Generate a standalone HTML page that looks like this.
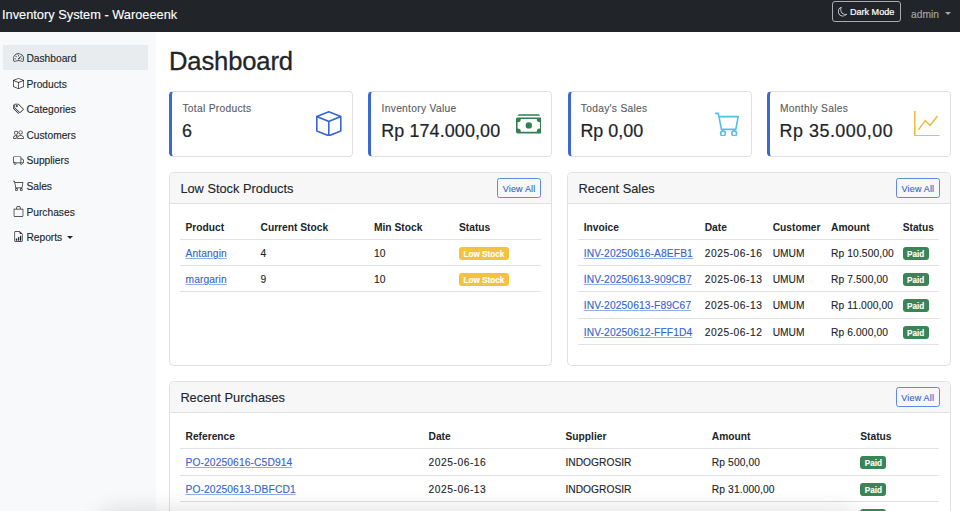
<!DOCTYPE html>
<html><head><meta charset="utf-8">
<style>
*{box-sizing:border-box;margin:0;padding:0}
html,body{width:960px;height:511px;overflow:hidden;background:#fff}
body{font-family:"Liberation Sans",sans-serif;color:#212529;font-size:10.24px;position:relative}
.abs{position:absolute}
.ni span,td,.ch .t,#brand,.stat .lbl{-webkit-text-stroke:.12px currentColor}
.stat .val{-webkit-text-stroke:.22px currentColor}
svg{display:block}
#nav{left:0;top:0;width:960px;height:32px;background:#212529}
#brand{left:2px;top:5px;height:20px;line-height:20px;font-size:12.8px;color:#fff;white-space:nowrap}
#dm{left:832px;top:1px;width:69px;height:20.6px;border:1px solid #a9abad;border-radius:3px;color:#fff}
#dm svg{position:absolute;left:4.8px;top:5.4px;width:9.4px;height:9.4px}
#dm span{position:absolute;left:16.9px;top:.5px;line-height:18px;font-size:9.1px;-webkit-text-stroke:.2px #fff;white-space:nowrap}
#admin{left:911px;top:7.3px;-webkit-text-stroke:.15px rgba(255,255,255,.5);line-height:16px;font-size:10.24px;color:rgba(255,255,255,.55);white-space:nowrap}
#admin i{display:inline-block;width:0;height:0;border-left:3px solid transparent;border-right:3px solid transparent;border-top:3px solid rgba(255,255,255,.6);margin-left:5.8px;vertical-align:3px;-webkit-text-stroke:0}
#side{left:0;top:32px;width:156px;height:479px;background:#f8f9fa}
.ni{position:absolute;left:3px;width:145.2px;height:25.4px;border-radius:0;color:#212529;font-size:10.24px;line-height:25.6px;white-space:nowrap}
.ni.act{background:#e9ecef}
.ni svg{position:absolute;left:9.5px;top:7.3px;width:11px;height:11px}
.ni span{position:absolute;left:23.4px;top:1px}
.caret{display:inline-block;width:0;height:0;border-left:3px solid transparent;border-right:3px solid transparent;border-top:3.5px solid #212529;margin-left:5.2px;vertical-align:2.3px}
h1{position:absolute;left:169px;top:44px;line-height:35px;font-size:25.6px;letter-spacing:-.15px;-webkit-text-stroke:.3px currentColor !important;font-weight:400;color:#212529;white-space:nowrap}
.card{position:absolute;border:1px solid #dfe0e1;border-radius:4.5px;background:#fff;overflow:hidden}
.stat{top:91px;width:184px;height:65.5px;border-left:3px solid #3a68d4}
.stat .lbl{position:absolute;left:10.2px;top:10px;line-height:14px;font-size:10.24px;letter-spacing:.3px;color:#595c5f;white-space:nowrap}
.stat .val{position:absolute;left:9.8px;top:27px;line-height:25px;font-size:17.92px;color:#212529;white-space:nowrap}
.stat svg{position:absolute;left:144.2px;top:18.8px}
.ch{position:absolute;left:0;top:0;right:0;height:31px;background:#f7f7f7;border-bottom:1px solid #dfe0e1}
.ch .t{position:absolute;left:10.2px;top:.5px;line-height:30px;font-size:12.8px;color:#212529;white-space:nowrap}
.btn{position:absolute;top:5px;height:19.8px;width:43.8px;border:1px solid #6089dd;border-radius:2.6px;color:#3564cc;-webkit-text-stroke:.12px currentColor;font-size:8.96px;line-height:21px;letter-spacing:.2px;text-align:center;white-space:nowrap;background:transparent}
table{position:absolute;border-collapse:collapse;table-layout:fixed;font-size:10.24px;color:#212529}
th{font-weight:700;text-align:left;height:24.3px;padding:2px 5.8px 0;border-bottom:1px solid #dee2e6;white-space:nowrap}
td{height:26.3px;padding:1.8px 5.8px 0;border-bottom:1px solid #dee2e6;white-space:nowrap}
a{color:#3564cc;text-decoration:underline;text-decoration-color:#93aee6;text-underline-offset:1px}
.badge{display:inline-block;font-size:8.2px;font-weight:700;color:#fff;border-radius:3px;padding:0 4.4px;height:13px;line-height:15.6px;vertical-align:middle}
.r3 td{color:#d6d6d6}.r3 a{color:#c9d6f2;text-decoration:none}
.pt th{padding-top:1.2px}
td.d{letter-spacing:.55px}td.m{letter-spacing:.12px}td a{letter-spacing:.12px}
.bw{background:#f3c23f}
.bs{background:#3a8558}
</style></head><body>
<div id="nav" class="abs">
  <div id="brand" class="abs">Inventory System - Waroeeenk</div>
  <div id="dm" class="abs">
    <svg width="9" height="9" viewBox="0 0 16 16" fill="#fff"><path d="M6 .278a.77.77 0 0 1 .08.858 7.2 7.2 0 0 0-.878 3.46c0 4.021 3.278 7.277 7.318 7.277q.792-.001 1.533-.16a.79.79 0 0 1 .81.316.73.73 0 0 1-.031.893A8.35 8.35 0 0 1 8.344 16C3.734 16 0 12.286 0 7.71 0 4.266 2.114 1.312 5.124.06A.75.75 0 0 1 6 .278M4.858 1.311A7.27 7.27 0 0 0 1.025 7.71c0 4.020 3.279 7.276 7.319 7.276a7.320 7.320 0 0 0 5.205-2.162q-.506.063-1.029.063c-4.610 0-8.343-3.714-8.343-8.290 0-1.167.242-2.278.681-3.286"/></svg>
    <span>Dark Mode</span>
  </div>
  <div id="admin" class="abs">admin<i></i></div>
</div>

<div id="side" class="abs"></div>
<div class="ni act" style="top:45px">
  <svg width="10.24" height="10.24" viewBox="0 0 16 16" fill="#212529"><path d="M8 4a.5.5 0 0 1 .5.5V6a.5.5 0 0 1-1 0V4.5A.5.5 0 0 1 8 4M3.732 5.732a.5.5 0 0 1 .707 0l.915.914a.5.5 0 1 1-.708.708l-.914-.915a.5.5 0 0 1 0-.707M2 10a.5.5 0 0 1 .5-.5h1.586a.5.5 0 0 1 0 1H2.5A.5.5 0 0 1 2 10m9.5 0a.5.5 0 0 1 .5-.5h1.5a.5.5 0 0 1 0 1H12a.5.5 0 0 1-.5-.5m.754-4.246a.39.39 0 0 0-.527-.02L7.547 9.310a.91.91 0 1 0 1.302 1.258l3.434-4.297a.39.39 0 0 0-.029-.518z"/><path fill-rule="evenodd" d="M0 10a8 8 0 1 1 15.547 2.661c-.442 1.253-1.845 1.602-2.932 1.250C11.309 13.488 9.475 13 8 13c-1.474 0-3.310.488-4.615.911-1.087.352-2.490.003-2.932-1.250A8 8 0 0 1 0 10m8-7a7 7 0 0 0-6.603 9.329c.203.575.923.876 1.680.630C4.397 12.533 6.358 12 8 12s3.604.532 4.923.960c.757.245 1.477-.056 1.680-.631A7 7 0 0 0 8 3"/></svg>
  <span>Dashboard</span></div>
<div class="ni" style="top:70.6px">
  <svg width="10.24" height="10.24" viewBox="0 0 16 16" fill="#212529"><path d="M8.186 1.113a.5.5 0 0 0-.372 0L1.846 3.5 8 5.961 14.154 3.5zM15 4.239l-6.5 2.6v7.922l6.5-2.6V4.24zM7.5 14.762V6.838L1 4.239v7.923zM7.443.184a1.5 1.5 0 0 1 1.114 0l7.129 2.852A.5.5 0 0 1 16 3.5v8.662a1 1 0 0 1-.629.928l-7.185 2.874a.5.5 0 0 1-.372 0L.63 13.09a1 1 0 0 1-.63-.928V3.5a.5.5 0 0 1 .314-.464z"/></svg>
  <span>Products</span></div>
<div class="ni" style="top:96.2px">
  <svg width="10.24" height="10.24" viewBox="0 0 16 16" fill="#212529"><path d="M3 2v4.586l7 7L14.586 9l-7-7zM2 2a1 1 0 0 1 1-1h4.586a1 1 0 0 1 .707.293l7 7a1 1 0 0 1 0 1.414l-4.586 4.586a1 1 0 0 1-1.414 0l-7-7A1 1 0 0 1 2 6.586z"/><path d="M5.5 5a.5.5 0 1 1 0-1 .5.5 0 0 1 0 1m0 1a1.5 1.5 0 1 0 0-3 1.5 1.5 0 0 0 0 3M1 7.086a1 1 0 0 0 .293.707L8.750 15.250l-.043.043a1 1 0 0 1-1.414 0l-7-7A1 1 0 0 1 0 7.586V3a1 1 0 0 1 1-1z"/></svg>
  <span>Categories</span></div>
<div class="ni" style="top:121.8px">
  <svg width="10.24" height="10.24" viewBox="0 0 16 16" fill="#212529"><path d="M15 14s1 0 1-1-1-4-5-4-5 3-5 4 1 1 1 1zm-7.978-1L7 12.996c.001-.264.167-1.030.760-1.720C8.312 10.629 9.282 10 11 10c1.717 0 2.687.630 3.240 1.276.593.690.758 1.457.760 1.720l-.008.002-.014.002zM11 7a2 2 0 1 0 0-4 2 2 0 0 0 0 4m3-2a3 3 0 1 1-6 0 3 3 0 0 1 6 0M6.936 9.280a6 6 0 0 0-1.230-.247A7 7 0 0 0 5 9c-4 0-5 3-5 4q0 1 1 1h4.216A2.240 2.240 0 0 1 5 13c0-1.010.377-2.042 1.090-2.904.243-.294.526-.569.846-.816M4.920 10A5.500 5.500 0 0 0 4 13H1c0-.260.164-1.030.760-1.724.545-.636 1.492-1.256 3.160-1.275zM1.500 5.500a3 3 0 1 1 6 0 3 3 0 0 1-6 0m3-2a2 2 0 1 0 0 4 2 2 0 0 0 0-4"/></svg>
  <span>Customers</span></div>
<div class="ni" style="top:147.4px">
  <svg width="10.24" height="10.24" viewBox="0 0 16 16" fill="#212529"><path d="M0 3.5A1.5 1.5 0 0 1 1.5 2h9A1.5 1.5 0 0 1 12 3.5V5h1.020a1.5 1.5 0 0 1 1.170.563l1.481 1.850a1.5 1.5 0 0 1 .329.938V10.5a1.5 1.5 0 0 1-1.5 1.5H14a2 2 0 1 1-4 0H5a2 2 0 1 1-3.998-.085A1.5 1.5 0 0 1 0 10.5zm1.294 7.456A2 2 0 0 1 4.732 11h5.536a2 2 0 0 1 .732-.732V3.5a.5.5 0 0 0-.5-.5h-9a.5.5 0 0 0-.5.5v7a.5.5 0 0 0 .294.456M12 10a2 2 0 0 1 1.732 1h.768a.5.5 0 0 0 .5-.5V8.350a.5.5 0 0 0-.110-.312l-1.480-1.850A.5.5 0 0 0 13.020 6H12zm-9 1a1 1 0 1 0 0 2 1 1 0 0 0 0-2m9 0a1 1 0 1 0 0 2 1 1 0 0 0 0-2"/></svg>
  <span>Suppliers</span></div>
<div class="ni" style="top:173px">
  <svg width="10.24" height="10.24" viewBox="0 0 16 16" fill="#212529"><path d="M0 1.5A.5.5 0 0 1 .5 1H2a.5.5 0 0 1 .485.379L2.890 3H14.5a.5.5 0 0 1 .491.592l-1.5 8A.5.5 0 0 1 13 12H4a.5.5 0 0 1-.491-.408L2.010 3.607 1.610 2H.5a.5.5 0 0 1-.5-.5M3.102 4l1.313 7h8.170l1.313-7zM5 12a2 2 0 1 0 0 4 2 2 0 0 0 0-4m7 0a2 2 0 1 0 0 4 2 2 0 0 0 0-4m-7 1a1 1 0 1 1 0 2 1 1 0 0 1 0-2m7 0a1 1 0 1 1 0 2 1 1 0 0 1 0-2"/></svg>
  <span>Sales</span></div>
<div class="ni" style="top:198.6px">
  <svg width="10.24" height="10.24" viewBox="0 0 16 16" fill="#212529"><path d="M8 1a2.5 2.5 0 0 1 2.5 2.5V4h-5v-.5A2.5 2.5 0 0 1 8 1m3.5 3v-.5a3.5 3.5 0 1 0-7 0V4H1v10a2 2 0 0 0 2 2h10a2 2 0 0 0 2-2V4zM2 5h12v9a1 1 0 0 1-1 1H3a1 1 0 0 1-1-1z"/></svg>
  <span>Purchases</span></div>
<div class="ni" style="top:224.2px">
  <svg width="10.24" height="10.24" viewBox="0 0 16 16" fill="#212529"><path d="M10 13.5a.5.5 0 0 0 .5.5h1a.5.5 0 0 0 .5-.5v-6a.5.5 0 0 0-.5-.5h-1a.5.5 0 0 0-.5.5zm-2.5.5a.5.5 0 0 1-.5-.5v-4a.5.5 0 0 1 .5-.5h1a.5.5 0 0 1 .5.5v4a.5.5 0 0 1-.5.5zm-3 0a.5.5 0 0 1-.5-.5v-2a.5.5 0 0 1 .5-.5h1a.5.5 0 0 1 .5.5v2a.5.5 0 0 1-.5.5z"/><path d="M14 14V4.5L9.5 0H4a2 2 0 0 0-2 2v12a2 2 0 0 0 2 2h8a2 2 0 0 0 2-2M9.5 3A1.5 1.5 0 0 0 11 4.5h2V14a1 1 0 0 1-1 1H4a1 1 0 0 1-1-1V2a1 1 0 0 1 1-1h5.5z"/></svg>
  <span>Reports<i class="caret"></i></span></div>

<h1>Dashboard</h1>
<div class="card stat" style="left:169.2px">
  <div class="lbl">Total Products</div><div class="val">6</div>
  <svg width="25.6" height="25.6" viewBox="0 0 16 16" fill="#3566d6"><path d="M8.186 1.113a.5.5 0 0 0-.372 0L1.846 3.5 8 5.961 14.154 3.5zM15 4.239l-6.5 2.6v7.922l6.5-2.6V4.24zM7.5 14.762V6.838L1 4.239v7.923zM7.443.184a1.5 1.5 0 0 1 1.114 0l7.129 2.852A.5.5 0 0 1 16 3.5v8.662a1 1 0 0 1-.629.928l-7.185 2.874a.5.5 0 0 1-.372 0L.63 13.09a1 1 0 0 1-.63-.928V3.5a.5.5 0 0 1 .314-.464z"/></svg>
</div>
<div class="card stat" style="left:368.4px">
  <div class="lbl">Inventory Value</div><div class="val" style="letter-spacing:.12px">Rp 174.000,00</div>
  <svg width="25.6" height="25.6" viewBox="0 0 16 16" fill="#337f52"><path d="M1 3a1 1 0 0 1 1-1h12a1 1 0 0 1 1 1zm7 8a2 2 0 1 0 0-4 2 2 0 0 0 0 4"/><path d="M0 5a1 1 0 0 1 1-1h14a1 1 0 0 1 1 1v8a1 1 0 0 1-1 1H1a1 1 0 0 1-1-1zm3 0a2 2 0 0 1-2 2v4a2 2 0 0 1 2 2h10a2 2 0 0 1 2-2V7a2 2 0 0 1-2-2z"/></svg>
</div>
<div class="card stat" style="left:567.6px">
  <div class="lbl">Today's Sales</div><div class="val">Rp 0,00</div>
  <svg width="25.6" height="25.6" viewBox="0 0 16 16" fill="#52bfe4"><path d="M0 1.5A.5.5 0 0 1 .5 1H2a.5.5 0 0 1 .485.379L2.890 3H14.5a.5.5 0 0 1 .491.592l-1.5 8A.5.5 0 0 1 13 12H4a.5.5 0 0 1-.491-.408L2.010 3.607 1.610 2H.5a.5.5 0 0 1-.5-.5M3.102 4l1.313 7h8.170l1.313-7zM5 12a2 2 0 1 0 0 4 2 2 0 0 0 0-4m7 0a2 2 0 1 0 0 4 2 2 0 0 0 0-4m-7 1a1 1 0 1 1 0 2 1 1 0 0 1 0-2m7 0a1 1 0 1 1 0 2 1 1 0 0 1 0-2"/></svg>
</div>
<div class="card stat" style="left:766.8px">
  <div class="lbl">Monthly Sales</div><div class="val" style="letter-spacing:.5px">Rp 35.000,00</div>
  <svg width="25.6" height="25.6" viewBox="0 0 16 16" fill="#e9bf48"><path fill-rule="evenodd" d="M0 0h1v15h15v1H0zm14.817 3.113a.5.5 0 0 1 .070.704l-4.5 5.5a.5.5 0 0 1-.740.037L7.060 6.767l-3.656 5.027a.5.5 0 0 1-.808-.588l4-5.5a.5.5 0 0 1 .758-.060l2.609 2.610 4.150-5.073a.5.5 0 0 1 .704-.070"/></svg>
</div>

<!-- LOW STOCK -->
<div class="card" style="left:169.2px;top:172px;width:383px;height:193.8px">
  <div class="ch"><div class="t">Low Stock Products</div><div class="btn" style="right:10.2px">View All</div></div>
  <table style="left:9.5px;top:42px;width:361.5px">
    <tr><th style="width:75px">Product</th><th style="width:113.5px">Current Stock</th><th style="width:85px">Min Stock</th><th>Status</th></tr>
    <tr><td><a>Antangin</a></td><td>4</td><td>10</td><td><span class="badge bw">Low Stock</span></td></tr>
    <tr><td><a>margarin</a></td><td>9</td><td>10</td><td><span class="badge bw">Low Stock</span></td></tr>
  </table>
</div>

<!-- RECENT SALES -->
<div class="card" style="left:567.4px;top:172px;width:383.6px;height:193.8px">
  <div class="ch"><div class="t">Recent Sales</div><div class="btn" style="right:10.2px">View All</div></div>
  <table style="left:9.5px;top:42px;width:361.5px">
    <tr><th style="width:121px">Invoice</th><th style="width:68px">Date</th><th style="width:58.3px">Customer</th><th style="width:71.7px">Amount</th><th>Status</th></tr>
    <tr><td><a>INV-20250616-A8EFB1</a></td><td class="d">2025-06-16</td><td>UMUM</td><td class="m">Rp 10.500,00</td><td><span class="badge bs">Paid</span></td></tr>
    <tr><td><a>INV-20250613-909CB7</a></td><td class="d">2025-06-13</td><td>UMUM</td><td class="m">Rp 7.500,00</td><td><span class="badge bs">Paid</span></td></tr>
    <tr><td><a>INV-20250613-F89C67</a></td><td class="d">2025-06-13</td><td>UMUM</td><td class="m">Rp 11.000,00</td><td><span class="badge bs">Paid</span></td></tr>
    <tr><td><a>INV-20250612-FFF1D4</a></td><td class="d">2025-06-12</td><td>UMUM</td><td class="m">Rp 6.000,00</td><td><span class="badge bs">Paid</span></td></tr>
  </table>
</div>

<!-- RECENT PURCHASES -->
<div class="card" style="left:169.2px;top:381px;width:781.6px;height:200px">
  <div class="ch"><div class="t">Recent Purchases</div><div class="btn" style="right:10.2px">View All</div></div>
  <table class="pt" style="left:9.5px;top:42.5px;width:759.5px">
    <tr><th style="width:243px">Reference</th><th style="width:137px">Date</th><th style="width:146.3px">Supplier</th><th style="width:148.5px">Amount</th><th>Status</th></tr>
    <tr><td><a>PO-20250616-C5D914</a></td><td class="d">2025-06-16</td><td>INDOGROSIR</td><td class="m">Rp 500,00</td><td><span class="badge bs">Paid</span></td></tr>
    <tr><td><a>PO-20250613-DBFCD1</a></td><td class="d">2025-06-13</td><td>INDOGROSIR</td><td class="m">Rp 31.000,00</td><td><span class="badge bs">Paid</span></td></tr>
    <tr class="r3"><td><a>PO-20250610-7A3E21</a></td><td class="d">2025-06-10</td><td>INDOGROSIR</td><td class="m">Rp 12.000,00</td><td><span class="badge bs">Paid</span></td></tr>
  </table>
</div>
<div class="abs" id="shade" style="left:100px;top:517px;width:760px;height:40px;border-radius:20px;background:#ddd;box-shadow:0 0 22px 8px rgba(0,0,0,.12)"></div>

</body></html>
